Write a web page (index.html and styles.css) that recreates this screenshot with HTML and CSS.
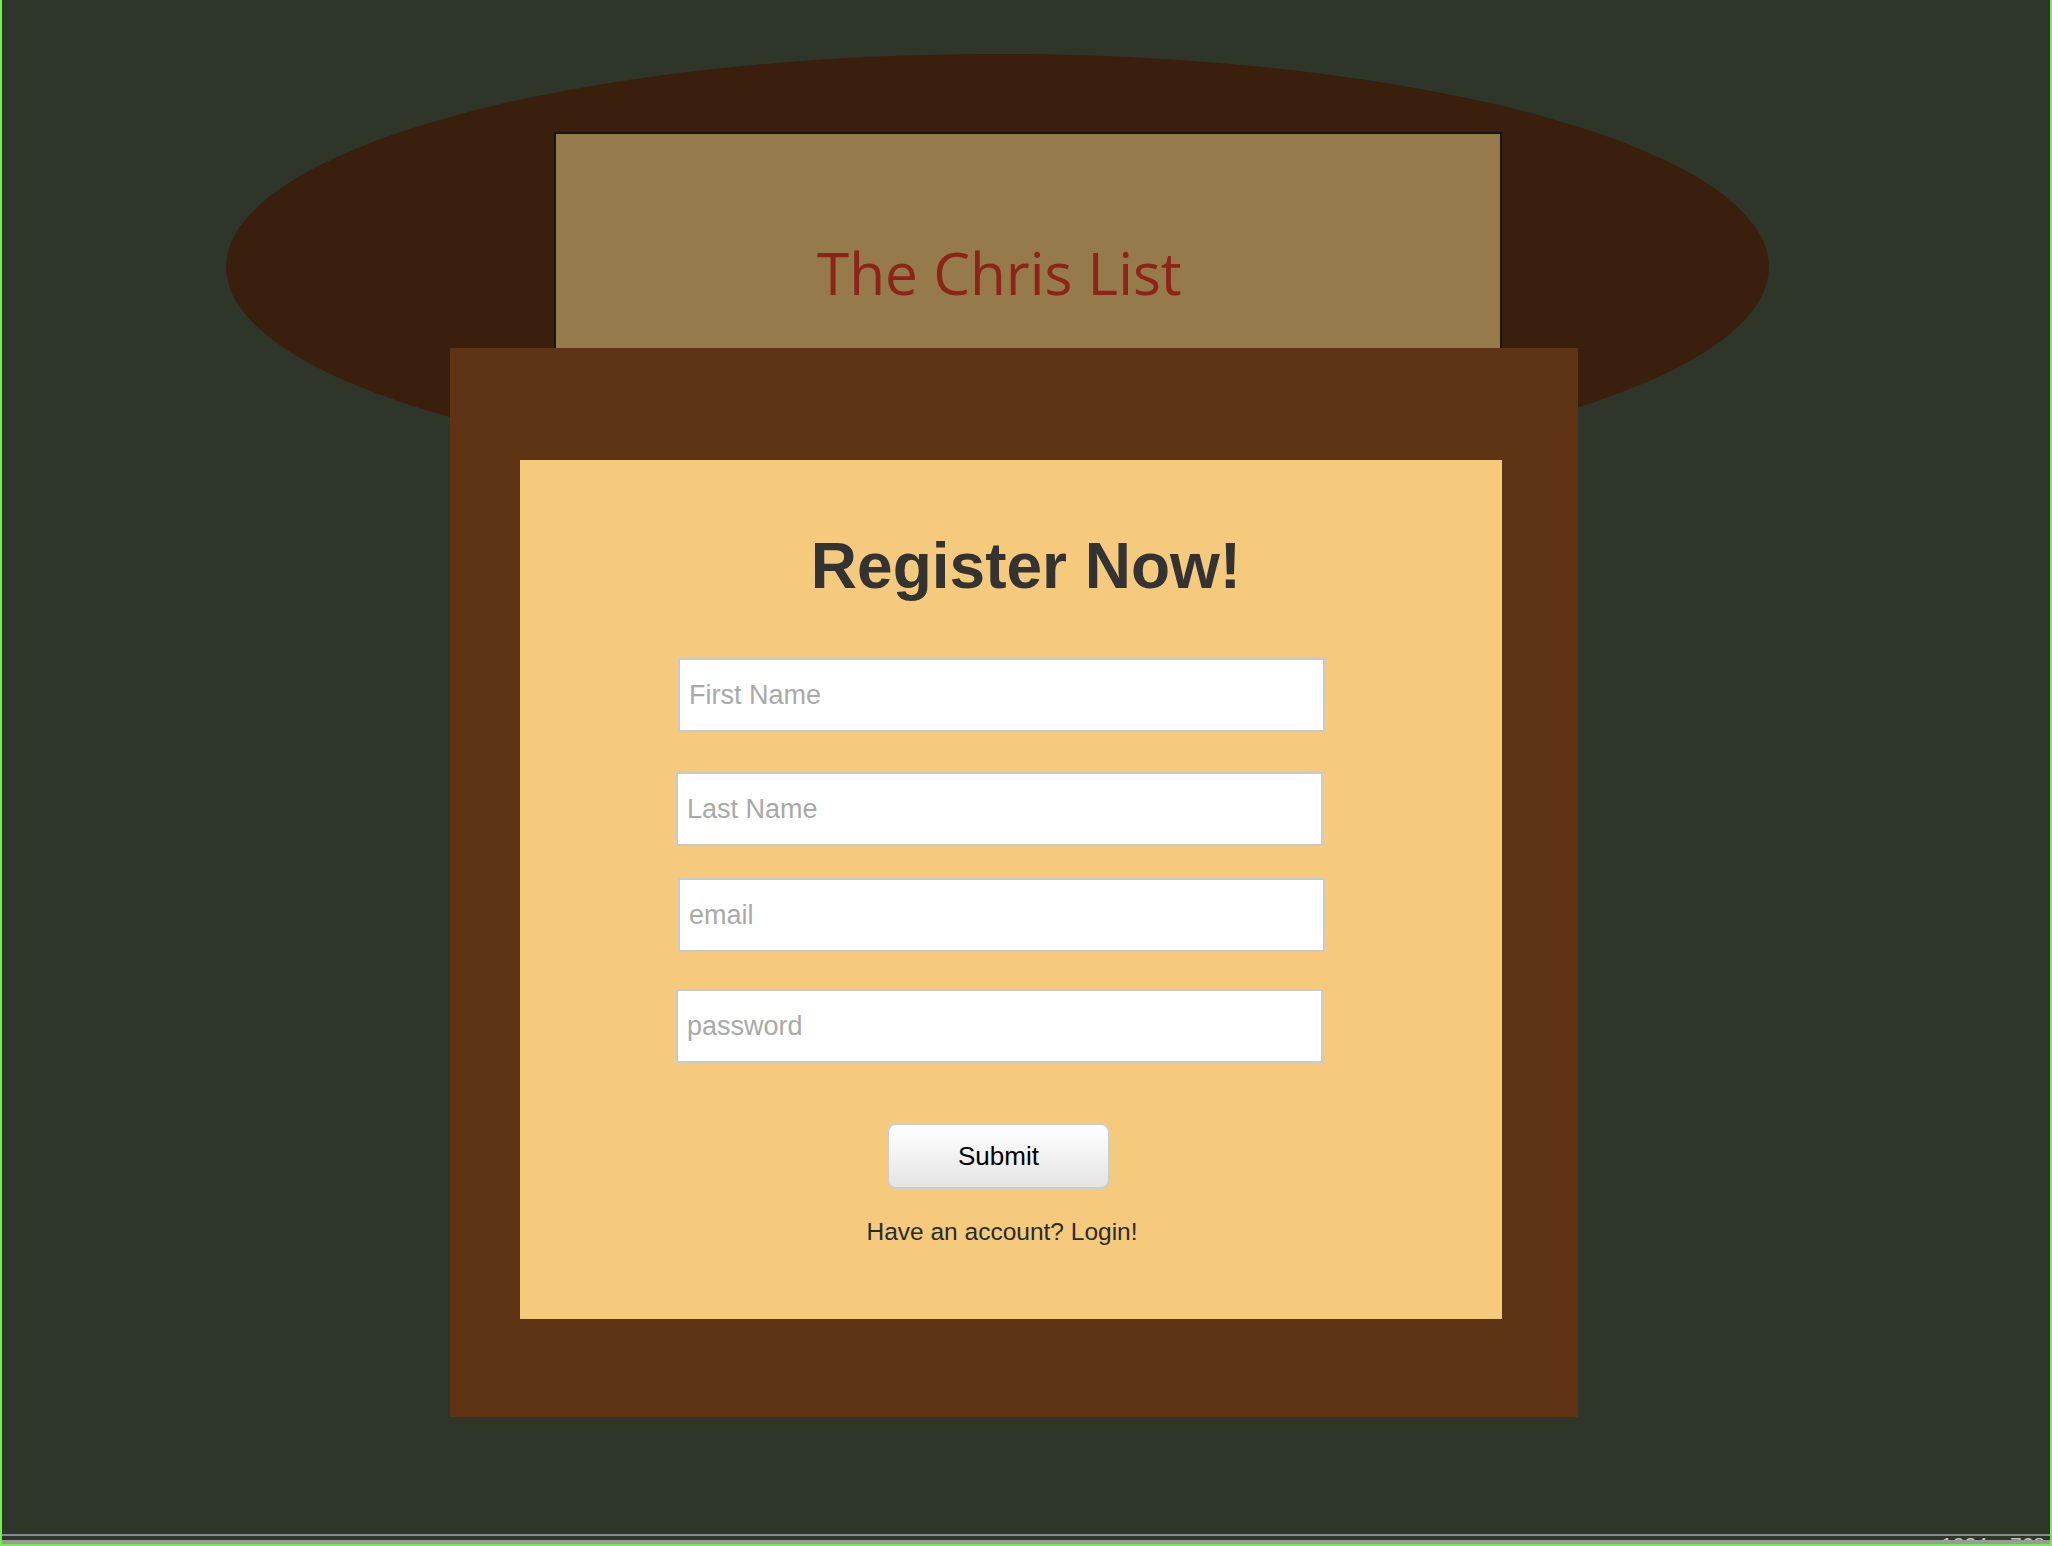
FILE: index.html
```html
<!DOCTYPE html>
<html lang="en">
<head>
<meta charset="utf-8">
<title>The Chris List - Register</title>
<link rel="stylesheet" href="styles.css">
</head>
<body>
<div class="frame">
  <div class="screen">
    <div class="blob"></div>
    <header class="masthead">
      <h1 class="brand">The Chris List</h1>
    </header>
    <main class="shell">
      <section class="card">
        <h2 class="card-title">Register Now!</h2>
        <form class="reg-form">
          <input class="field field-a" type="text" placeholder="First Name">
          <input class="field field-b" type="text" placeholder="Last Name">
          <input class="field field-c" type="email" placeholder="email">
          <input class="field field-d" type="password" placeholder="password">
          <button class="submit" type="button">Submit</button>
          <p class="login-line">Have an account? Login!</p>
        </form>
      </section>
    </main>
  </div>
  <div class="statusbar"><span class="dims">1024 x 768</span></div>
</div>
</body>
</html>
```

FILE: styles.css
```css
html, body {
  margin: 0;
  padding: 0;
  background: #2d3629;
}

.frame {
  width: 2052px;
  height: 1546px;
  box-sizing: border-box;
  border-left: 2px solid #6ef24b;
  border-right: 2px solid #6ef24b;
  border-bottom: 2px solid #6ef24b;
  background: #2d3629;
  overflow: hidden;
}

.screen {
  position: relative;
  height: 1534px;
  box-sizing: border-box;
  padding-top: 132px;
  overflow: hidden;
}

.blob {
  position: absolute;
  left: 224px;
  top: 54px;
  width: 1543px;
  height: 426px;
  border-radius: 50%;
  background: #3a1f0c;
}

.masthead {
  position: relative;
  z-index: 1;
  margin-left: 552px;
  width: 948px;
  height: 216px;
  box-sizing: border-box;
  border: 2px solid #171512;
  border-bottom: none;
  background: #957a4b;
  padding-top: 97px;
  padding-left: 261px;
}

.brand {
  margin: 0;
  font-family: "Open Sans", "Noto Sans", sans-serif;
  font-weight: 400;
  font-size: 58.5px;
  line-height: 82px;
  color: #8e2318;
  white-space: nowrap;
}

.shell {
  position: relative;
  z-index: 2;
  display: block;
  margin-left: 448px;
  width: 1128px;
  height: 1069px;
  box-sizing: border-box;
  padding-top: 112px;
  padding-left: 70px;
  background: #5e3314;
}

.card {
  width: 982px;
  height: 859px;
  box-sizing: border-box;
  padding-top: 69px;
  background: #f5ca7c;
  font-family: "Liberation Sans", Arial, sans-serif;
}

.card-title {
  margin: 0;
  padding-left: 30px;
  text-align: center;
  font-size: 64px;
  line-height: 74px;
  font-weight: 700;
  color: #333333;
}

.reg-form {
  display: flex;
  flex-direction: column;
  align-items: flex-start;
  margin: 0;
}

.field {
  display: block;
  width: 647px;
  height: 74px;
  box-sizing: border-box;
  margin: 0;
  padding: 0 9px;
  border: 2px solid #c9c9c9;
  border-radius: 0;
  background: #ffffff;
  font-family: "Liberation Sans", Arial, sans-serif;
  font-size: 27px;
  color: #333333;
  outline: none;
}

.field::placeholder {
  color: #a9a9a9;
  opacity: 1;
}

.field-a { margin-top: 55px; margin-left: 158px; }
.field-b { margin-top: 40px; margin-left: 156px; }
.field-c { margin-top: 32px; margin-left: 158px; }
.field-d { margin-top: 37px; margin-left: 156px; }

.submit {
  display: block;
  margin-top: 60px;
  margin-left: 367px;
  width: 223px;
  height: 66px;
  box-sizing: border-box;
  padding: 0;
  border: 2px solid #cdcdcd;
  border-radius: 9px;
  background: linear-gradient(to bottom, #ffffff 0%, #f2f2f2 50%, #e3e3e3 100%);
  font-family: "Liberation Sans", Arial, sans-serif;
  font-size: 26px;
  color: #000000;
}

.login-line {
  align-self: stretch;
  margin: 29px 0 0 0;
  padding-right: 18px;
  text-align: center;
  font-size: 24.5px;
  line-height: 28px;
  color: #2b2b2b;
}

.statusbar {
  position: relative;
  height: 10px;
  box-sizing: border-box;
  border-top: 2px solid #8a8a8a;
  border-bottom: 4px solid #9a9a9a;
  overflow: hidden;
}

.dims {
  position: absolute;
  right: 5px;
  top: -2px;
  font-family: "Liberation Sans", Arial, sans-serif;
  font-size: 21px;
  line-height: 21px;
  color: #c4c4c4;
  white-space: nowrap;
}
```
